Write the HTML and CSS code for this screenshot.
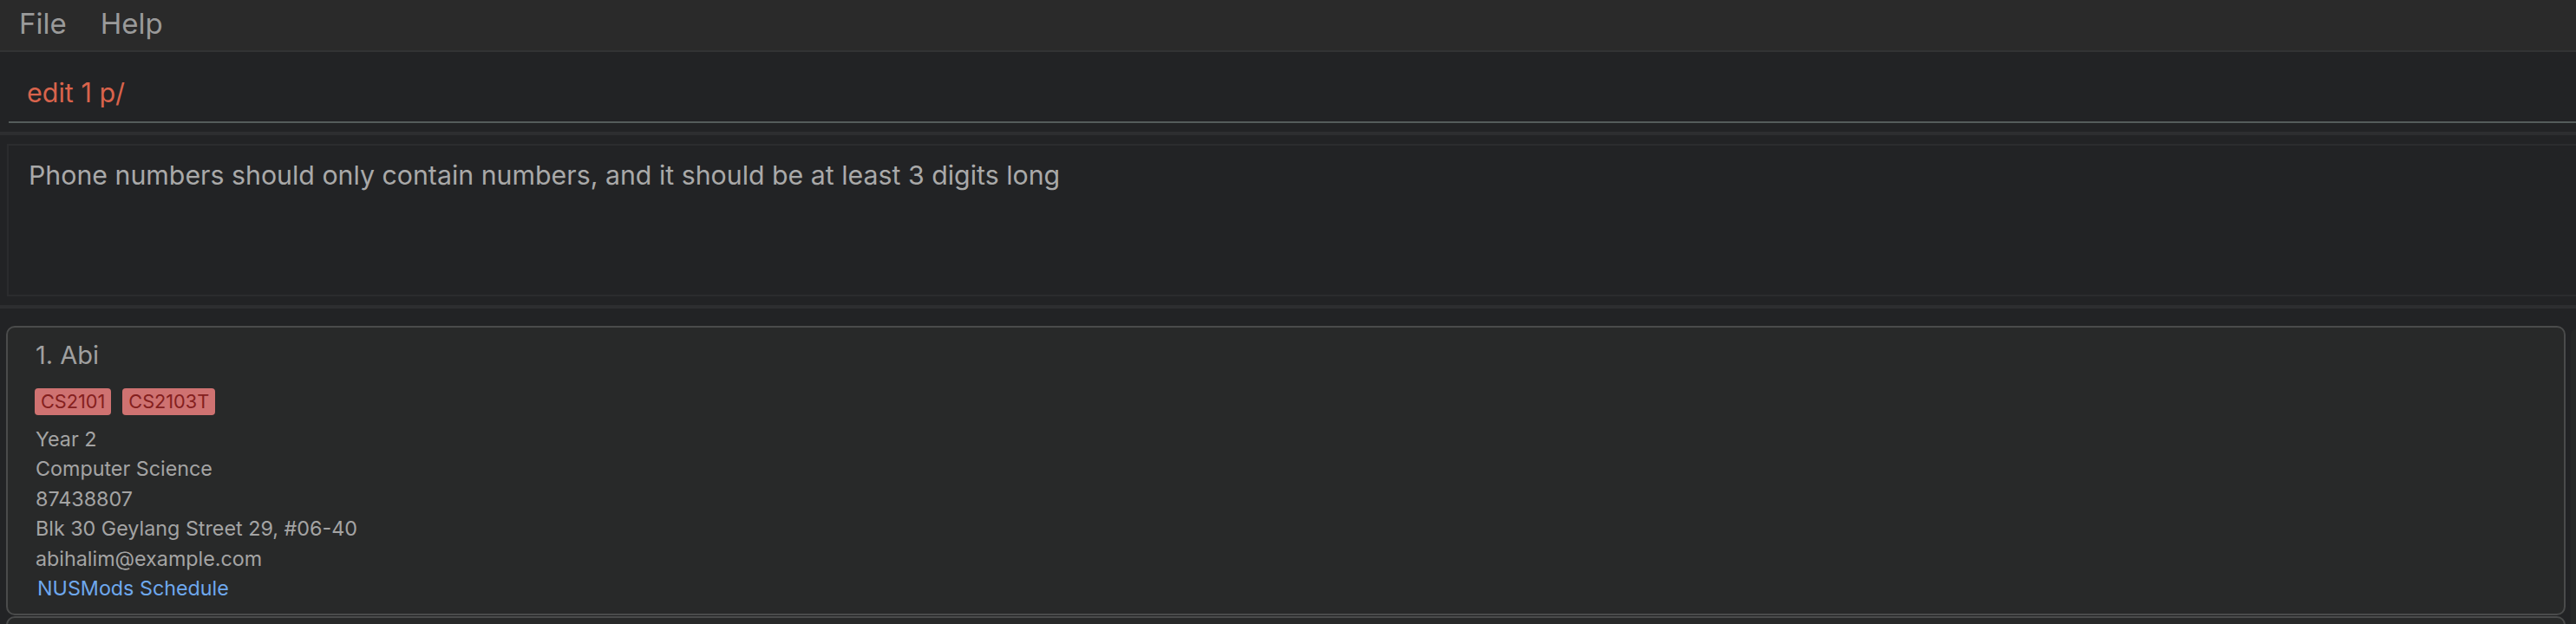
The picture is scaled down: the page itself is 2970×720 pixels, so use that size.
FILE: index.html
```html
<!DOCTYPE html>
<html>
<head>
<meta charset="utf-8">
<link rel="stylesheet" href="styles.css">
</head>
<body>
<div class="app">
  <nav class="menubar">
    <span class="menu-item">File</span>
    <span class="menu-item">Help</span>
  </nav>
  <section class="command-pane">
    <div class="command-input">edit 1 p/</div>
  </section>
  <div class="band"></div>
  <section class="result-pane">
    <div class="result-box">Phone numbers should only contain numbers, and it should be at least 3 digits long</div>
  </section>
  <div class="band"></div>
  <section class="list-pane">
    <div class="list">
      <article class="card">
        <div class="card-name">1. Abi</div>
        <div class="tags">
          <span class="tag">CS2101</span>
          <span class="tag">CS2103T</span>
        </div>
        <div class="detail">Year 2</div>
        <div class="detail">Computer Science</div>
        <div class="detail">87438807</div>
        <div class="detail">Blk 30 Geylang Street 29, #06-40</div>
        <div class="detail">abihalim@example.com</div>
        <div class="detail link">NUSMods Schedule</div>
      </article>
      <article class="card"></article>
    </div>
    <div class="scrollbar"></div>
  </section>
</div>
</body>
</html>
```

FILE: styles.css
```css
html, body {
  margin: 0;
  padding: 0;
  background: #222325;
  overflow: hidden;
}

.app {
  display: flex;
  flex-direction: column;
  width: 2970px;
  height: 720px;
  overflow: hidden;
  font-family: Inter, "Liberation Sans", sans-serif;
}

.menubar {
  display: flex;
  align-items: center;
  gap: 39px;
  height: 58px;
  padding-left: 22px;
  background: #2a2a2a;
  border-bottom: 2px solid #323334;
  flex-shrink: 0;
}

.menu-item {
  color: #9a9a9a;
  font-size: 33px;
  line-height: 1;
  padding-bottom: 4px;
}

.command-pane {
  height: 92px;
  flex-shrink: 0;
  padding-left: 10px;
  box-sizing: border-box;
}

.command-input {
  height: 82px;
  box-sizing: border-box;
  border-bottom: 2px solid #555c5b;
  padding-left: 21px;
  padding-top: 32px;
  color: #d9634c;
  font-size: 30.5px;
  line-height: 30px;
}

.band {
  height: 4px;
  background: #2d2e30;
  flex-shrink: 0;
}

.result-pane {
  padding: 10px 0 10px 8px;
  flex-shrink: 0;
}

.result-box {
  height: 176px;
  box-sizing: border-box;
  margin-right: -20px;
  border: 2px solid #2b2c2e;
  padding: 17px 0 0 23px;
  color: #a9a9a9;
  font-size: 30.3px;
  line-height: 34px;
}

.list-pane {
  flex: 1;
  display: flex;
  padding: 20px 0 0 7px;
  min-height: 0;
  overflow: hidden;
}

.list {
  flex: 1;
  display: flex;
  flex-direction: column;
}

.card {
  width: 2951px;
  height: 334px;
  flex-shrink: 0;
  box-sizing: border-box;
  background: #282929;
  border: 2px solid #4a4b4b;
  border-radius: 10px;
  padding: 14px 0 0 32px;
  margin-bottom: 1px;
}

.card-name {
  color: #a0a0a0;
  font-size: 29px;
  line-height: 36px;
}

.tags {
  display: flex;
  gap: 13px;
  margin: 20px 0 11px;
  margin-left: -1px;
}

.tag {
  background: #cf7271;
  color: #84201e;
  font-size: 21.7px;
  line-height: 31px;
  height: 31px;
  padding: 0 7px;
  border-radius: 4px;
}

.detail {
  color: #a4a4a4;
  font-size: 23.3px;
  line-height: 34.4px;
}

.link {
  color: #6ea8ee;
  padding-left: 2px;
}

.scrollbar {
  width: 6px;
  margin-left: 5px;
  margin-top: 4px;
  background: #262827;
  border-radius: 6px 0 0 0;
}
```
